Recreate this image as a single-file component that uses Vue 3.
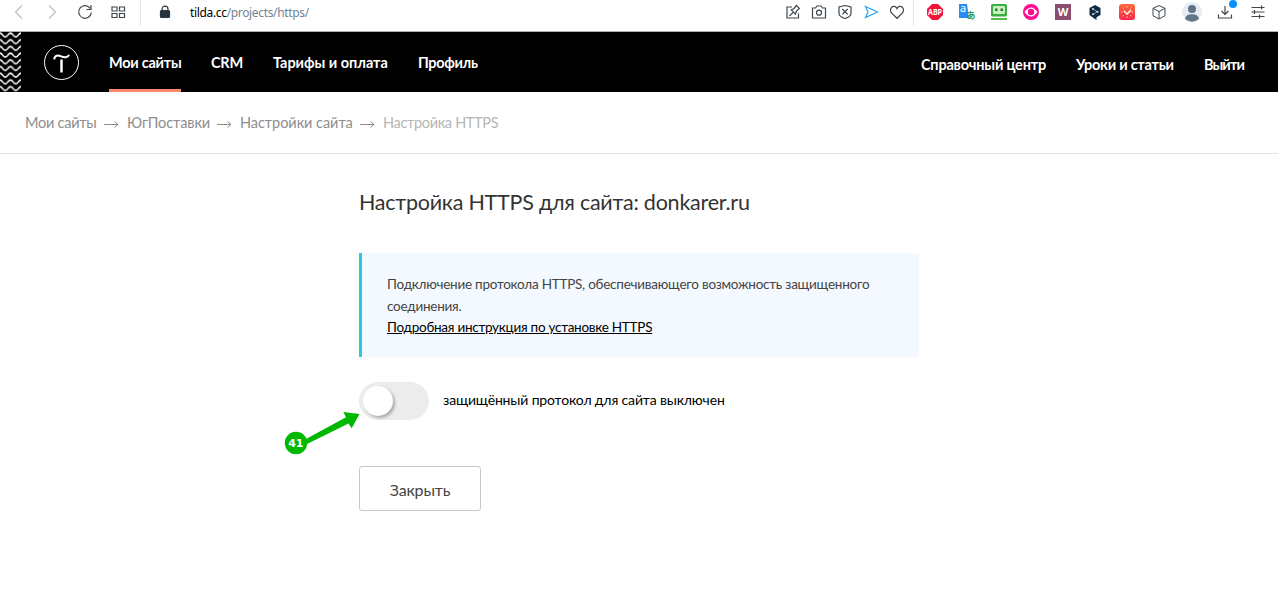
<template>
    <div class="page">
        <div class="browser-bar">
            <svg class="icon back" viewBox="0 0 24 24"><path d="M15 5.500 8.500 12l6.500 6.500" /></svg>
            <svg class="icon forward" viewBox="0 0 24 24"><path d="m9 5.500 6.500 6.500L9 18.500" /></svg>
            <svg class="icon reload" viewBox="0 0 24 24"><path d="M17.300 8.500A6.300 6.300 0 1 0 18.300 12.500M18 5v4.500h-4.500" /></svg>
            <svg class="icon tiles" viewBox="0 0 24 24">
                <path d="M6 7h5v4H6zM13.500 7h5v4h-5zM6 13.500h5v4H6zM13.500 13.500h5v4h-5z" />
            </svg>
            <div class="bar-line first"></div>
            <svg class="icon lock" viewBox="0 0 24 24">
                <path d="M9 11V9.200a3 3 0 0 1 6 0V11" />
                <rect x="7.500" y="10.500" width="9" height="7" rx="1" />
            </svg>
            <div class="address">tilda.cc<span>/projects/https/</span></div>
            <div class="page-tools">
                <svg class="icon" viewBox="0 0 24 24">
                    <path d="M11 7H6v11h11.500v-4.500M8.500 16l3.700-3.700M10.300 9.800l4.200 4.300 .8-2.700 3-3-2.900-2.900-2.600 3.200z" />
                </svg>
                <svg class="icon" viewBox="0 0 24 24">
                    <path d="M5.500 8h3l1.500-2h4l1.500 2h3v10h-13z" />
                    <circle cx="12" cy="12.700" r="2.500" />
                </svg>
                <svg class="icon" viewBox="0 0 24 24">
                    <path d="M12 5.500 18 7v6.500q0 3-6 5-6-2-6-5V7zM9.300 9l5.400 5.400M14.700 9l-5.400 5.400" />
                </svg>
                <svg class="icon send" viewBox="0 0 24 24"><path d="m6.500 6.500 12 5.500-12 5.500 2.500-5.500z" /></svg>
                <svg class="icon" viewBox="0 0 24 24">
                    <path d="M12 18.300 6.500 13Q4.500 9.500 6.600 7.300C8.500 5.500 11 6.200 12 8.600c1-2.400 3.500-3.100 5.400-1.300Q19.500 9.500 17.500 13z" />
                </svg>
            </div>
            <div class="bar-line second"></div>
            <div class="extensions">
                <svg viewBox="0 0 16 16">
                    <path d="M5 0h6l5 5v6l-5 5H5l-5-5V5z" fill="#f0143c" />
                    <text class="abp" x="8" y="11" textLength="14" lengthAdjust="spacingAndGlyphs">ABP</text>
                </svg>
                <svg viewBox="0 0 16 16">
                    <path d="M0 0h8l2 14H0z" fill="#2a8cf4" />
                    <text class="letter-a" x="4" y="8">a</text>
                    <text class="letter-jp" x="12" y="14.500">あ</text>
                </svg>
                <svg viewBox="0 0 16 16">
                    <rect width="16" height="12.500" rx="1.500" fill="#3cad40" />
                    <rect x="2" y="2" width="12" height="8" rx="1" fill="#c9f0c3" />
                    <path d="M4 4.500h2.500V7H4zM9.500 4.500H12V7H9.500z" fill="#247c2a" />
                    <path d="M0 14h16v2H0z" fill="#55bb4b" />
                </svg>
                <svg viewBox="0 0 16 16">
                    <circle cx="8" cy="8" r="8" fill="#ff0a91" />
                    <path d="M1.500 8Q8-1 14.500 8 8 17 1.500 8" fill="#fff" />
                    <circle cx="8" cy="8" r="3.200" fill="#ff0a91" />
                </svg>
                <svg viewBox="0 0 16 16">
                    <rect width="16" height="16" fill="#894f70" />
                    <text class="letter-w" x="8" y="12">W</text>
                </svg>
                <svg viewBox="0 0 16 16">
                    <path d="m8 1 5.500 3v7l-4 2.300V16l-3-2-4-3V4z" fill="#0f2b46" />
                    <path d="m6 5 4.500 2.700L6 10.300" fill="none" stroke="#a9bac5" stroke-width=".8" />
                    <path d="M5.200 4.200h1.600v1.600H5.200zM9.700 7h1.600v1.600H9.700zM5.200 9.500h1.600v1.600H5.200z" fill="#fff" />
                </svg>
                <svg viewBox="0 0 16 16">
                    <defs>
                        <linearGradient id="clock" x2="0" y2="1">
                            <stop stop-color="#ff6b35" />
                            <stop offset="1" stop-color="#f8254c" />
                        </linearGradient>
                    </defs>
                    <rect width="16" height="16" rx="3" fill="url(#clock)" />
                    <path d="m5 7 3 3 4-4" fill="none" stroke="#fff" stroke-width="1.400" />
                    <path d="M8 2v1.500M8 12.500V14M2 8h1.500M12.500 8H14M3.700 3.700l1 1M11.300 11.300l1 1M3.700 12.300l1-1M11.300 4.700l1-1" stroke="#ffd5ce" />
                </svg>
                <svg class="outline" viewBox="0 0 16 16"><path d="m8 1.500 6 2.800v7.400l-6 3.300-6-3.300V4.300zM2 4.300 8 7.500l6-3.200M8 7.500V15" /></svg>
            </div>
            <svg class="avatar" viewBox="0 0 20 20">
                <circle cx="10" cy="10" r="10" fill="#e3ebf4" />
                <circle cx="10" cy="7" r="4" fill="#627486" />
                <path d="M3.200 17.300q0-5 6.800-5t6.800 5Q10 22 3.200 17.300" fill="#627486" />
            </svg>
            <div class="downloads">
                <svg class="icon" viewBox="0 0 24 24"><path d="M12 6v8.500M8.500 11l3.500 3.500 3.500-3.500M5.500 14.500V18h13v-3.500" /></svg>
                <i></i>
            </div>
            <svg class="icon" viewBox="0 0 24 24">
                <path d="M5.500 7.500h13M5.500 12h13M5.500 16.500h13M15.500 5.500v4M8.500 10v4M13.500 14.500v4" />
            </svg>
        </div>
        <header class="header">
            <svg class="waves" width="21" height="60">
                <defs>
                    <pattern id="wave" width="10.500" height="6.700" patternUnits="userSpaceOnUse">
                        <path d="M-5.250 4.900C-2.600 4.900-2.600 1.100 0 1.100S2.600 4.900 5.250 4.900 7.900 1.100 10.500 1.100 13.100 4.900 15.750 4.900" />
                    </pattern>
                </defs>
                <rect width="21" height="60" fill="url(#wave)" />
            </svg>
            <svg class="logo" viewBox="0 0 35 35">
                <circle cx="17.500" cy="17.500" r="17" />
                <path class="logo-top" d="M10.200 14.300c.5-4.500 4-4.100 7-2.900 3.200 1.400 6.800 1.300 7.800-1.700" />
                <path class="logo-leg" d="M17.500 14.500v13" />
            </svg>
            <nav class="menu">
                <a v-for="item in menu" :key="item.text" :class="[item.name, { active: item.active }]" v-text="item.text"></a>
            </nav>
            <nav class="menu menu-right">
                <a class="help">Справочный центр</a>
                <a class="lessons">Уроки и статьи</a>
                <a class="logout">Выйти</a>
            </nav>
        </header>
        <div class="breadcrumbs">
            <template v-for="(crumb, index) in crumbs" :key="crumb.text">
                <svg v-if="index" class="crumb-arrow" viewBox="0 0 15 8"><path d="M0 4.500h14M10.500 1.500l3.500 3-3.500 3" /></svg>
                <span :class="crumb.name" v-text="crumb.text"></span>
            </template>
        </div>
        <main class="content">
            <h1>Настройка HTTPS для сайта: donkarer.ru</h1>
            <div class="notice">
                <p>Подключение протокола HTTPS, обеспечивающего возможность защищенного<br />соединения.</p>
                <a>Подробная инструкция по установке HTTPS</a>
            </div>
            <div class="protocol">
                <div class="switch" :class="{ on: enabled }" @click="enabled = !enabled"><div class="knob"></div></div>
                <span>защищённый протокол для сайта {{ enabled ? "включен" : "выключен" }}</span>
                <svg class="pointer" width="80" height="48" viewBox="0 0 80 48">
                    <path d="M22 29 62 7.300 59.300 2 75.500 4 67.700 18.300 64.500 13.500 23 34z" />
                    <circle cx="12" cy="33" r="11.200" />
                    <text x="11.800" y="37">41</text>
                </svg>
            </div>
            <button class="close-button">Закрыть</button>
        </main>
    </div>
</template>
<script setup>
import { ref } from "vue";
let enabled = ref(false);
/* Главное меню */
const menu = [
    { text: "Мои сайты", name: "sites", active: true },
    { text: "CRM", name: "crm" },
    { text: "Тарифы и оплата", name: "rates" },
    { text: "Профиль", name: "profile" },
];
const crumbs = [
    { text: "Мои сайты", name: "crumb-sites" },
    { text: "ЮгПоставки", name: "crumb-project" },
    { text: "Настройки сайта", name: "crumb-settings" },
    { text: "Настройка HTTPS", name: "crumb-current" },
];
</script>
<style>
body {
    margin: 0;
    background: #fff;
}
</style>
<style scoped>
.page {
    width: 1278px;
    height: 605px;
    overflow: hidden;
    font-family: Lato, "Open Sans", sans-serif;
    color: #000;
}
.page svg {
    flex: none;
    display: block;
}
.browser-bar {
    box-sizing: border-box;
    height: 32px;
    padding: 0 8px 7px 7px;
    border-bottom: 1px solid #acb1b5;
    display: flex;
    align-items: center;
}
.icon {
    width: 24px;
    height: 24px;
    fill: none;
    stroke: #3d474d;
    stroke-width: 1.2;
}
.back,
.forward {
    stroke: #bcc0c3;
}
.forward,
.reload,
.tiles {
    margin-left: 9px;
}
.bar-line {
    width: 1px;
    height: 27px;
    background: #e3e5e7;
}
.first {
    margin-left: 10px;
}
.icon.lock {
    margin-left: 12px;
    fill: #26343d;
    stroke: #26343d;
}
.icon.lock path {
    fill: none;
}
.address {
    width: 127px;
    margin-left: 13px;
    padding-top: 1px;
    font: 12px/20px "Noto Sans", sans-serif;
    letter-spacing: -0.34px;
    white-space: nowrap;
}
.address span {
    color: #728394;
}
.page-tools {
    display: flex;
    gap: 2px;
    margin-left: auto;
}
.send {
    stroke: #29a3f5;
}
.second {
    margin-left: 4px;
}
.extensions {
    display: flex;
    gap: 16px;
    margin-left: 13px;
}
.extensions svg {
    width: 16px;
    height: 16px;
    overflow: visible;
}
.extensions text {
    fill: #fff;
    text-anchor: middle;
    font-family: "Noto Sans", "Noto Sans CJK JP", sans-serif;
    font-weight: 700;
}
.extensions .abp {
    font-size: 8px;
}
.extensions .letter-a {
    font-size: 11px;
    font-weight: 400;
}
.extensions .letter-jp {
    font-size: 9px;
    fill: #359b51;
}
.extensions .letter-w {
    font-size: 11px;
}
.outline {
    fill: none;
    stroke: #3d474d;
}
.avatar {
    width: 20px;
    height: 20px;
    margin-left: 15px;
}
.downloads {
    position: relative;
    margin: 0 9px 0 11px;
}
.downloads i {
    position: absolute;
    top: 0;
    right: 0;
    width: 8px;
    height: 8px;
    border-radius: 50%;
    background: #0592ff;
}
.header {
    height: 60px;
    display: flex;
    background: #000;
}
.waves path {
    fill: none;
    stroke: #fff;
    stroke-width: 1.5;
}
.logo {
    width: 35px;
    height: 35px;
    margin: 13px 0 0 23px;
    fill: none;
    stroke: #fff;
}
.logo-top {
    stroke-width: 2;
}
.logo-leg {
    stroke-width: 2.5;
}
.menu {
    display: flex;
    gap: 30px;
    margin-left: 30px;
    color: #fff;
    font-size: 14.5px;
    font-weight: 700;
    line-height: 61px;
    letter-spacing: -0.26px;
    white-space: nowrap;
}
.menu a {
    box-sizing: border-box;
    height: 60px;
}
.menu .active {
    border-bottom: 3px solid #fa876b;
}
.sites {
    width: 72px;
}
.crm {
    width: 32px;
}
.rates {
    width: 115px;
    letter-spacing: -0.03px;
}
.menu .profile {
    width: 60px;
    letter-spacing: -0.35px;
}
.menu-right {
    margin-left: auto;
    margin-right: 34px;
    line-height: 65px;
}
.help {
    width: 125px;
    letter-spacing: -0.2px;
}
.lessons {
    width: 98px;
}
.logout {
    width: 40px;
    letter-spacing: -0.9px;
}
.breadcrumbs {
    height: 61px;
    padding-left: 25px;
    border-bottom: 1px solid #e4e4e4;
    display: flex;
    align-items: center;
    color: #8d8d8d;
    font-size: 14.5px;
    white-space: nowrap;
}
.breadcrumbs .crumb-arrow {
    width: 15px;
    height: 8px;
    margin: 2px 8px 0 7px;
    fill: none;
    stroke: #8d8d8d;
}
.crumb-sites {
    width: 72px;
    letter-spacing: -0.25px;
}
.crumb-project {
    width: 83px;
    letter-spacing: -0.1px;
}
.crumb-settings {
    width: 113px;
    letter-spacing: -0.05px;
}
.crumb-current {
    color: #b6b6b6;
    letter-spacing: -0.33px;
}
.content {
    width: 560px;
    margin: 0 auto;
    padding-top: 32px;
}
h1 {
    margin: 0;
    font-size: 21.5px;
    line-height: 32px;
    font-weight: 400;
    letter-spacing: -0.24px;
    color: #333;
    white-space: nowrap;
}
.notice {
    box-sizing: border-box;
    height: 104px;
    margin-top: 35px;
    padding: 20px 25px;
    border-left: 3px solid #2dc6e7;
    background: #f4f9ff;
    font-size: 13.5px;
    line-height: 22px;
    letter-spacing: -0.24px;
    white-space: nowrap;
}
.notice p {
    margin: 0;
    color: #444;
}
.notice a {
    display: block;
    width: fit-content;
    line-height: 20px;
    letter-spacing: -0.26px;
    text-decoration: underline;
}
.protocol {
    position: relative;
    display: flex;
    align-items: center;
    margin-top: 25px;
    font-size: 14px;
    letter-spacing: -0.15px;
}
.protocol span {
    margin-left: 14px;
    padding-bottom: 3px;
    white-space: nowrap;
}
.switch {
    box-sizing: border-box;
    width: 70px;
    height: 38px;
    padding: 4px;
    border-radius: 19px;
    background: #ececec;
    cursor: pointer;
}
.on {
    background: #2dc6e7;
}
.knob {
    width: 30px;
    height: 30px;
    border-radius: 50%;
    background: #fff;
    box-shadow: 2px 2px 3px #aaa;
}
.on .knob {
    margin-left: 32px;
}
.pointer {
    position: absolute;
    top: 28px;
    left: -75px;
    fill: #00b800;
}
.pointer text {
    fill: #fff;
    font: 700 11px "DejaVu Sans", sans-serif;
    text-anchor: middle;
}
.close-button {
    display: block;
    width: 122px;
    height: 45px;
    margin-top: 46px;
    padding: 1px 0 0;
    border: 1px solid #c8c8c8;
    border-radius: 3px;
    background: #fff;
    color: #444;
    font-family: inherit;
    font-size: 16px;
    letter-spacing: -0.15px;
    cursor: pointer;
}
</style>
